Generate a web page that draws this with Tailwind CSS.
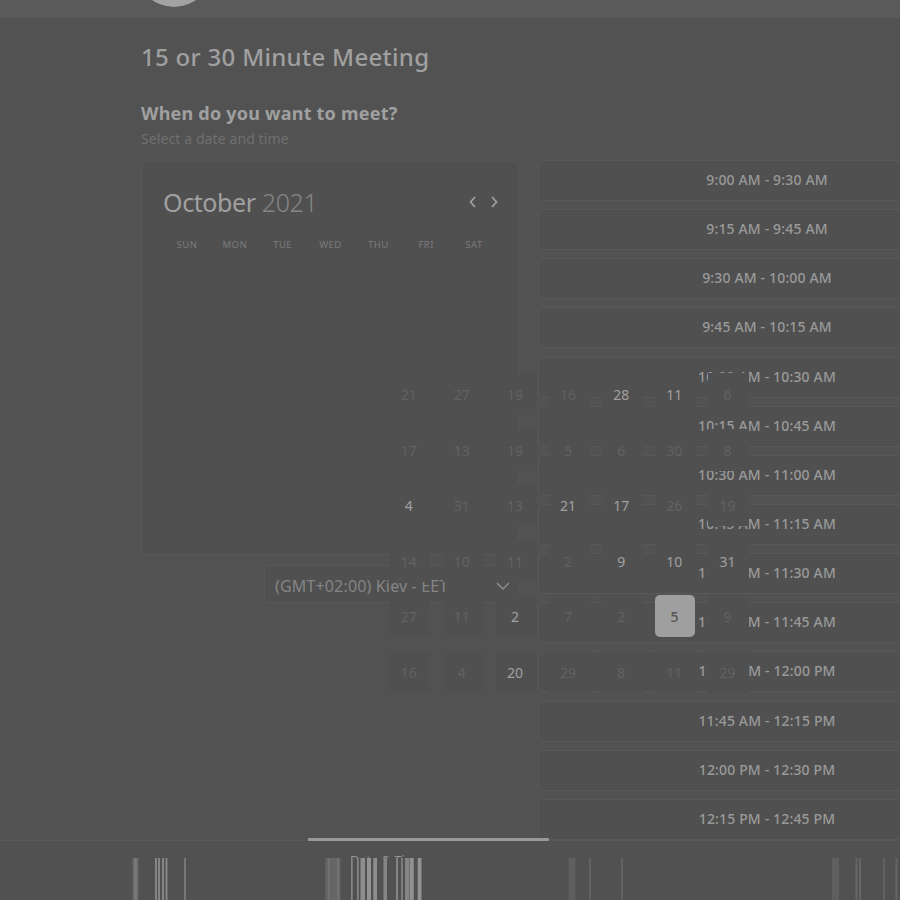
<!DOCTYPE html>
<html lang="en">
<head>
<meta charset="utf-8">
<title>15 or 30 Minute Meeting</title>
<script src="https://cdn.jsdelivr.net/npm/@tailwindcss/browser@4"></script>
</head>
<body class="bg-[#525252]">
<div class="relative flex h-[900px] w-[900px] flex-col overflow-hidden bg-[#525252] font-['Noto_Sans','Open_Sans',sans-serif] text-[#a0a0a0]">
  <header class="h-[18px] shrink-0 overflow-hidden bg-[#5a5a5a] pl-[136px]">
    <div class="-mt-[69px] size-[76px] rounded-full bg-[#a2a2a2]"></div>
  </header>

  <main class="flex h-[822px] shrink-0 flex-col overflow-hidden pl-[141px]">
    <h1 class="mt-[21px] h-9 whitespace-nowrap text-2xl leading-9 font-medium tracking-[0.3px]">15 or 30 Minute Meeting</h1>
    <h2 class="mt-[25px] h-7 whitespace-nowrap text-lg leading-[27px] font-bold tracking-[0.22px]">When do you want to meet?</h2>
    <p class="mt-[1px] h-5 whitespace-nowrap text-sm leading-5 tracking-[0.1px] text-[#707070]">Select a date and time</p>

    <div class="mt-[11px] flex">
      <div class="mt-[1px] flex w-[378px] shrink-0 flex-col items-end">
        <section class="h-[394px] w-full rounded-[5px] border border-[#575757] bg-[#505050] pl-[21px]">
          <div class="mt-[22px] flex h-9 items-center">
            <div class="w-[306px] whitespace-nowrap text-[25px] leading-9 tracking-[-0.4px]">October <span class="font-light text-[#868686]">2021</span></div>
            <svg class="h-4 w-9" viewBox="0 0 36 16" fill="none" stroke="#a3a3a3" stroke-width="1.7"><path d="M6 3 1.5 8 6 13M23 3l4.5 5-4.5 5"/></svg>
          </div>
          <div class="mt-[16px] grid w-[335px] grid-cols-7 text-center text-[9.5px] leading-[17px] tracking-[0.5px] text-[#7b7b7b]">
            <span>SUN</span><span>MON</span><span>TUE</span><span>WED</span><span>THU</span><span>FRI</span><span>SAT</span>
          </div>
        </section>
        <div class="mt-[10px] flex h-[38px] w-[255px] items-center justify-between rounded-[4px] border border-[#575757] bg-[#505050] pt-[3px] pr-[7px] pl-[10px] text-base tracking-[0.16px] text-[#858585]">
          <span class="whitespace-nowrap">(GMT+02:00) Kiev - EET</span>
          <svg class="relative z-10 size-4" viewBox="0 0 16 16" fill="none" stroke="#8c8c8c" stroke-width="1.5"><path d="m2 5 6 6 6-6"/></svg>
        </div>
      </div>
      <div id="slots" class="ml-[19px] flex w-[458px] shrink-0 flex-col gap-[8.15px]"></div>
    </div>
  </main>

  <footer class="h-[60px] shrink-0 border-t border-[#585858] bg-[#515151]">
    <div class="flex h-[17px] items-end overflow-hidden pl-[350px]">
      <div class="h-[4px] overflow-hidden whitespace-nowrap text-[13px] leading-[12px] tracking-[-0.1px] text-[#959595]">Date &amp; Time</div>
    </div>
    <svg id="stripes" class="h-[43px] w-[900px]" viewBox="0 0 900 43"></svg>
  </footer>

  <div id="dates" class="absolute top-[373px] left-[389.5px] grid grid-cols-[repeat(7,40.8px)] gap-x-[12.35px] gap-y-[13.6px] text-center text-sm leading-[44px]"></div>
  <div class="absolute top-[837.5px] left-[308px] h-[3.5px] w-[241px] rounded-[1px] bg-[#999]"></div>
</div>

<template id="slot"><div class="h-[41px] shrink-0 rounded-[4px] border border-[#585858] bg-[#505050] text-center text-sm leading-[38.6px] font-medium tracking-[0.16px] text-[#9a9a9a]"><span class="whitespace-nowrap"></span></div></template>
<template id="day"><div class="h-[42px] bg-[#505050] pr-[2.5px] text-[#626262]"></div></template>
<template id="open"><div class="h-[42px] bg-[#505050] pr-[2.5px] text-[#a0a0a0]"></div></template>
<template id="picked"><div class="h-[42px] w-[39.5px] rounded-[5px] bg-[#9f9f9f] pr-[1px] font-medium text-[#555]"></div></template>
<script>
const make = (id) => document.getElementById(id).content.firstElementChild.cloneNode(true);
const times = ['9:00 AM','9:15 AM','9:30 AM','9:45 AM','10:00 AM','10:15 AM','10:30 AM','10:45 AM','11:00 AM','11:15 AM','11:30 AM','11:45 AM','12:00 PM','12:15 PM','12:30 PM','12:45 PM'];
for (let i = 0; i < 14; i++) {
  const el = make('slot');
  el.firstElementChild.textContent = times[i] + ' - ' + times[i + 2];
  document.getElementById('slots').append(el);
}
const days = '21 27 19 16 +28 +11 6 17 13 19 5 6 30 8 +4 31 13 +21 +17 26 19 14 10 11 2 +9 +10 +31 27 11 +2 7 2 *5 9 16 4 +20 29 8 11 29';
for (const d of days.split(' ')) {
  const el = make(d[0] === '+' ? 'open' : d[0] === '*' ? 'picked' : 'day');
  el.textContent = d.replace(/[+*]/, '');
  document.getElementById('dates').append(el);
}
// x, width, colour
const bars = [[132.5,6,'#686868'],[134,3,'#787878'],[155,2,'#858585'],[158,2,'#858585'],[162,2,'#858585'],[165.5,2,'#858585'],[184,2,'#777'],
[325.5,15,'#666'],[328,1.5,'#737373'],[337,2,'#737373'],[351,1.7,'#858585'],[357,1.7,'#858585'],[360.5,4.5,'#8d8d8d'],[367,4,'#929292'],[373.3,3.7,'#8d8d8d'],[383.5,3.5,'#858585'],[396,2,'#858585'],[401,2,'#7c7c7c'],[405,4.2,'#858585'],[409.7,4,'#929292'],[417.7,3.8,'#929292'],
[568.5,7,'#5f5f5f'],[589,2,'#616161'],[621,2,'#616161'],[832,7,'#5f5f5f'],[855.5,2,'#666'],[859,2,'#666'],[883,2,'#616161'],[895.5,2,'#666']];
for (const [x, w, c] of bars) {
  const r = document.createElementNS('http://www.w3.org/2000/svg', 'rect');
  r.setAttribute('x', x); r.setAttribute('y', 0); r.setAttribute('width', w); r.setAttribute('height', 43); r.setAttribute('fill', c);
  document.getElementById('stripes').append(r);
}
</script>
</body>
</html>
